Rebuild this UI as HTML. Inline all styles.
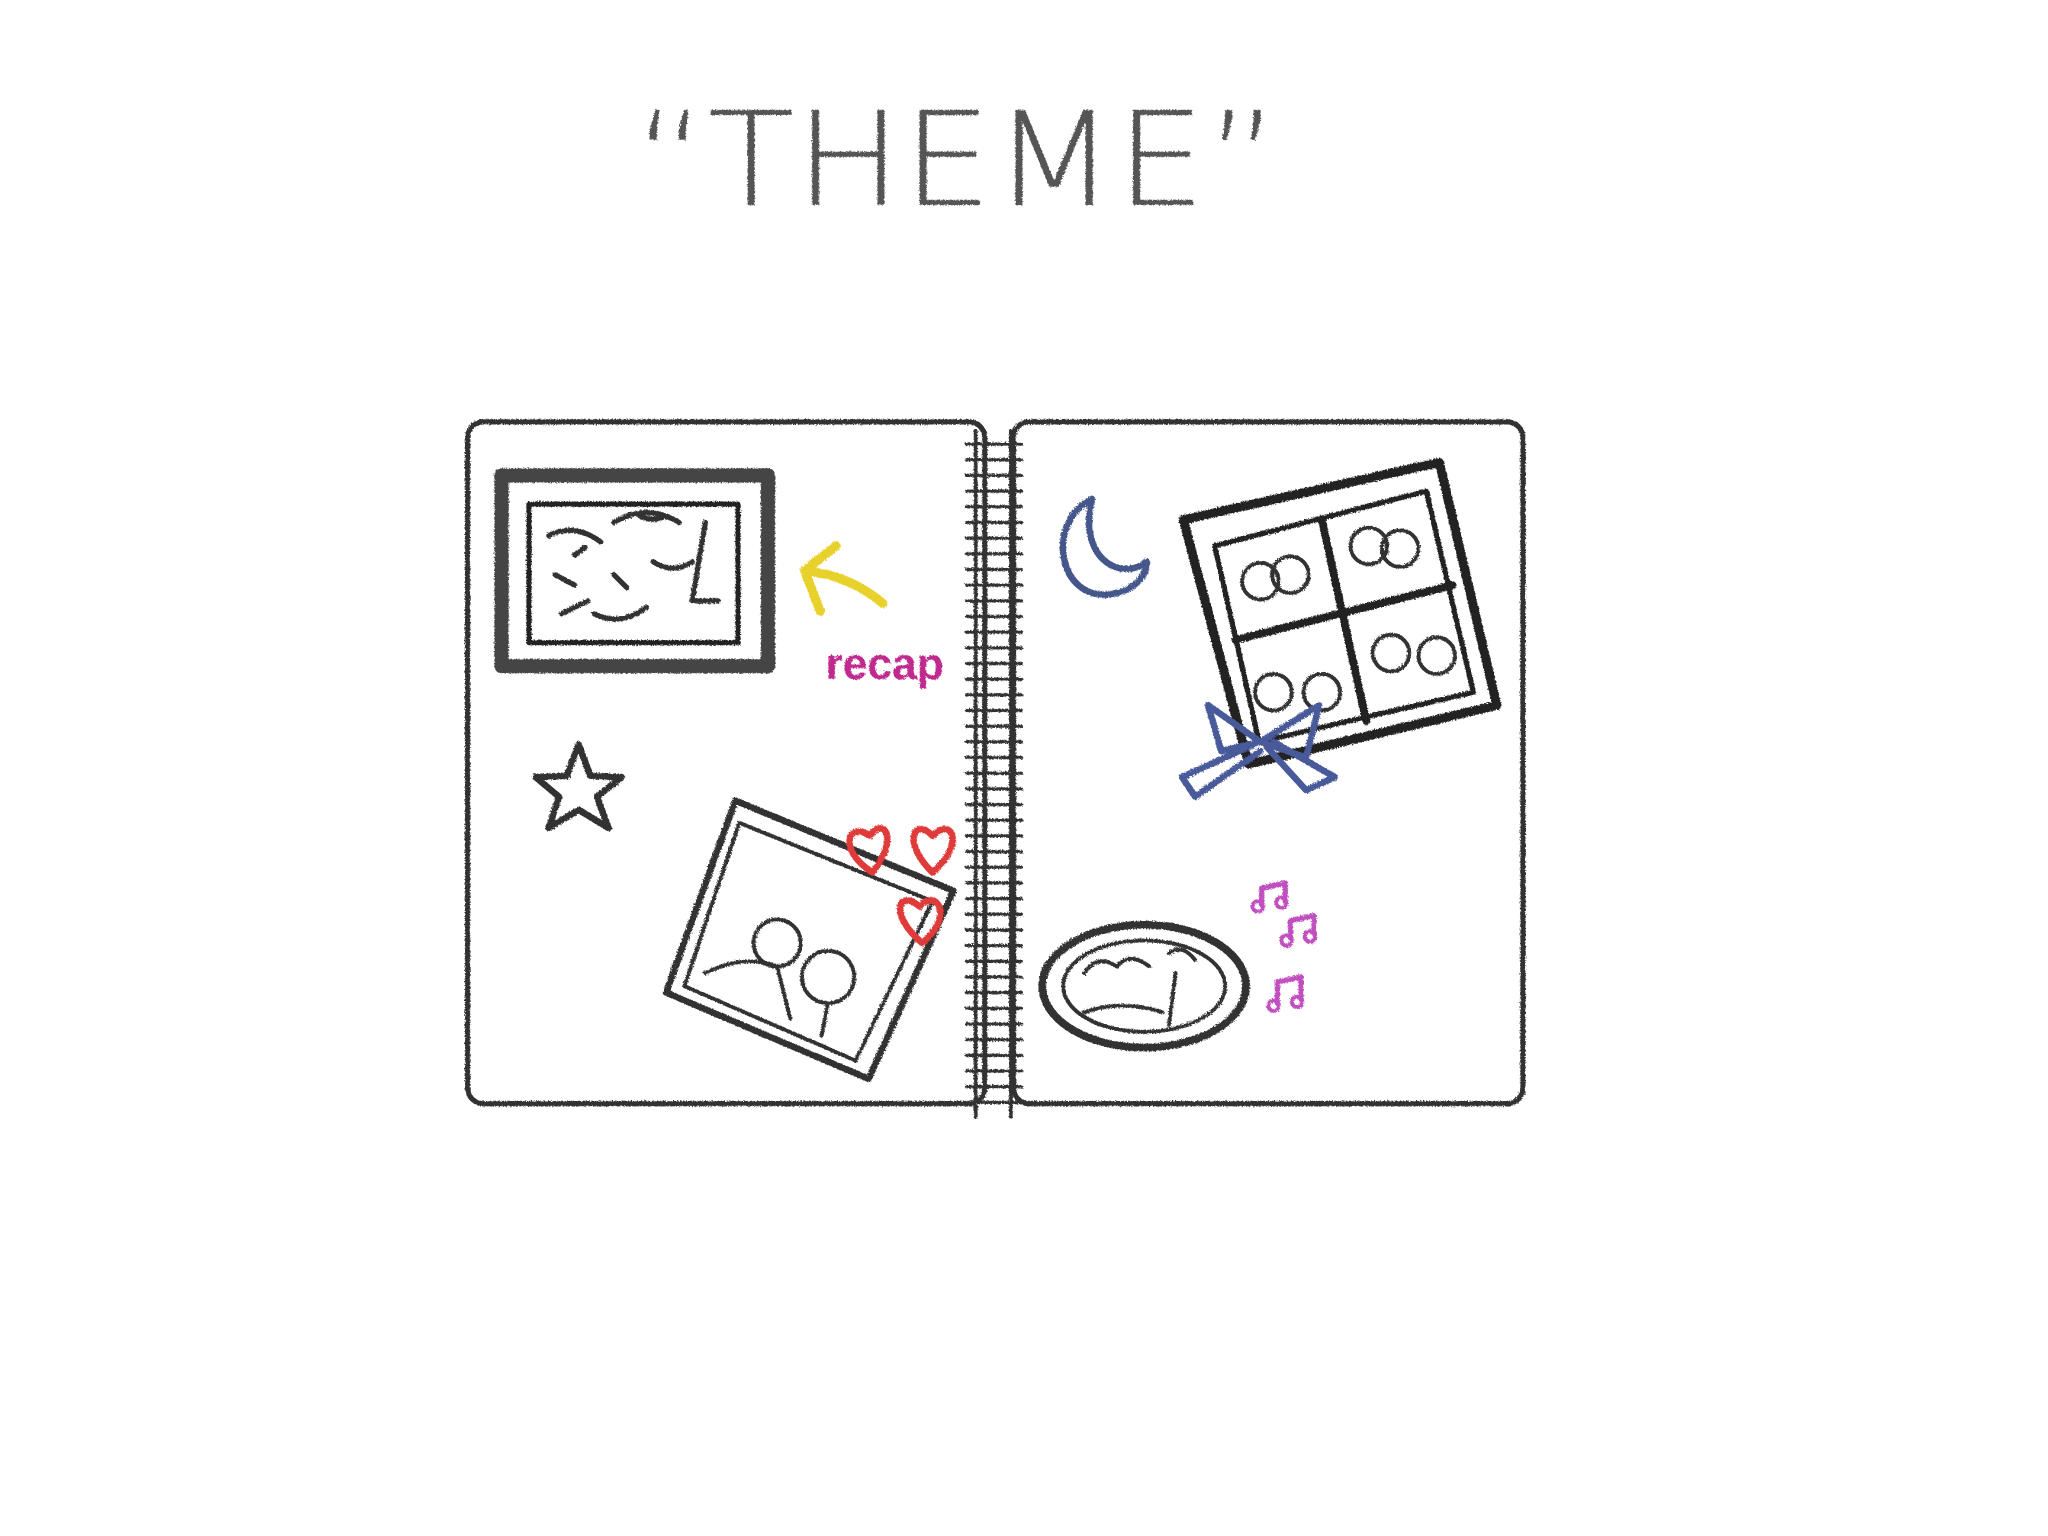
<!DOCTYPE html>
<html><head><meta charset="utf-8"><style>
html,body{margin:0;padding:0;background:#fff;width:2048px;height:1536px;overflow:hidden}
svg{display:block}
</style></head><body>
<svg width="2048" height="1536" viewBox="0 0 1568 1176" xmlns="http://www.w3.org/2000/svg">
<defs>
<filter id="p" x="-5%" y="-5%" width="110%" height="110%">
<feTurbulence type="fractalNoise" baseFrequency="0.9" numOctaves="2" result="n"/>
<feDisplacementMap in="SourceGraphic" in2="n" scale="3"/>
</filter>
</defs>
<g filter="url(#p)" fill="none" stroke-linecap="round" stroke-linejoin="round">
<!-- title -->
<text x="485" y="157" font-family="DejaVu Sans, Liberation Sans, sans-serif" font-size="100" font-weight="200" fill="#555" stroke="none" textLength="495" lengthAdjust="spacingAndGlyphs">“THEME”</text>
<!-- notebook pages -->
<rect x="358" y="323" width="396" height="522" rx="12" stroke="#333" stroke-width="4"/>
<rect x="776" y="323" width="390" height="522" rx="12" stroke="#333" stroke-width="4"/>
<!-- spiral -->
<line x1="747" y1="330" x2="747" y2="855" stroke="#333" stroke-width="3"/>
<line x1="774" y1="330" x2="774" y2="855" stroke="#333" stroke-width="3"/>
<path d="M740 340 L782 340 M740 352 L782 352 M740 364 L782 364 M740 376 L782 376 M740 388 L782 388 M740 400 L782 400 M740 412 L782 412 M740 424 L782 424 M740 436 L782 436 M740 448 L782 448 M740 460 L782 460 M740 472 L782 472 M740 484 L782 484 M740 496 L782 496 M740 508 L782 508 M740 520 L782 520 M740 532 L782 532 M740 544 L782 544 M740 556 L782 556 M740 568 L782 568 M740 580 L782 580 M740 592 L782 592 M740 604 L782 604 M740 616 L782 616 M740 628 L782 628 M740 640 L782 640 M740 652 L782 652 M740 664 L782 664 M740 676 L782 676 M740 688 L782 688 M740 700 L782 700 M740 712 L782 712 M740 724 L782 724 M740 736 L782 736 M740 748 L782 748 M740 760 L782 760 M740 772 L782 772 M740 784 L782 784 M740 796 L782 796 M740 808 L782 808 M740 820 L782 820 M740 832 L782 832 M740 844 L782 844" stroke="#333" stroke-width="2.5"/>
<!-- stamp frame -->
<rect x="384" y="364" width="204" height="146" stroke="#444" stroke-width="11" stroke-dasharray="2 2"/>
<rect x="405" y="386" width="160" height="106" stroke="#222" stroke-width="4"/>
<path d="M420 410 q20 -10 40 5 M470 400 q25 -15 50 0 M425 440 l15 8 M430 470 l20 -10 M455 470 q20 10 40 -5 M500 430 q15 10 30 0 M540 400 l-10 60 l20 0 M470 440 l10 10 M490 395 q10 5 20 0 M440 425 l8 -6" stroke="#333" stroke-width="4"/>
<!-- yellow arrow -->
<path d="M676 462 Q650 440 616 437 M616 437 L640 418 M616 437 L628 468" stroke="#e8d12a" stroke-width="7"/>
<text x="632" y="520" font-family="Liberation Sans, sans-serif" font-size="34" font-weight="bold" fill="#c02a8f" stroke="none">recap</text>
<!-- star -->
<path d="M443 570 L452 594 L476 595 L457 610 L466 634 L443 620 L420 634 L428 610 L410 595 L434 594 Z" stroke="#333" stroke-width="5"/>
<!-- tilted photo -->
<path d="M563 613 L730 682 L665 826 L510 760 Z" stroke="#333" stroke-width="5"/>
<path d="M566 630 L714 690 L655 812 L524 755 Z" stroke="#333" stroke-width="3"/>
<circle cx="595" cy="722" r="18" stroke="#333" stroke-width="3"/>
<circle cx="634" cy="748" r="20" stroke="#333" stroke-width="3"/>
<path d="M540 745 q30 -15 55 -5 M595 740 l10 40 M634 768 l-5 25" stroke="#333" stroke-width="3"/>
<!-- hearts -->
<path d="M668 668 C640 650 650 628 666 640 C675 625 690 640 668 668 Z" stroke="#e03a3a" stroke-width="5"/>
<path d="M714 668 C690 645 700 625 714 640 C728 625 740 645 714 668 Z" stroke="#e03a3a" stroke-width="5"/>
<path d="M706 722 C680 700 688 680 704 694 C716 680 732 700 706 722 Z" stroke="#e03a3a" stroke-width="5"/>
<!-- moon -->
<path d="M836 382 C800 400 810 460 850 455 C870 452 878 440 878 430 C860 445 825 430 836 382 Z" stroke="#44578a" stroke-width="5"/>
<!-- photo booth grid -->
<path d="M906 398 L1102 354 L1146 540 L956 585 Z" stroke="#222" stroke-width="7"/>
<path d="M930 418 L1092 376 L1128 530 L964 568 Z" stroke="#222" stroke-width="4"/>
<path d="M946 490 L1112 448 M1012 398 L1046 552" stroke="#222" stroke-width="6"/>
<circle cx="965" cy="445" r="14" stroke="#333" stroke-width="3"/><circle cx="988" cy="440" r="14" stroke="#333" stroke-width="3"/>
<circle cx="1048" cy="418" r="14" stroke="#333" stroke-width="3"/><circle cx="1072" cy="420" r="14" stroke="#333" stroke-width="3"/>
<circle cx="975" cy="530" r="14" stroke="#333" stroke-width="3"/><circle cx="1012" cy="530" r="14" stroke="#333" stroke-width="3"/>
<circle cx="1065" cy="500" r="14" stroke="#333" stroke-width="3"/><circle cx="1100" cy="502" r="14" stroke="#333" stroke-width="3"/>
<!-- bow -->
<path d="M965 568 L925 540 L935 575 Z M965 568 L1010 540 L1000 580 Z M960 570 L905 595 L915 610 L965 575 M970 572 L1000 605 L1022 595 L975 568" stroke="#4a5a9a" stroke-width="5"/>
<!-- oval frame -->
<ellipse cx="876" cy="755" rx="78" ry="47" stroke="#333" stroke-width="6" stroke-dasharray="3 2"/>
<ellipse cx="876" cy="755" rx="62" ry="35" stroke="#333" stroke-width="3"/>
<path d="M830 745 q10 -15 25 -5 q10 -12 25 0 M895 730 q10 -8 20 5 M900 745 l-5 40 M830 775 q30 -10 60 0" stroke="#333" stroke-width="3"/>
<!-- music notes -->
<path d="M966 693 L966 680 L984 676 L984 690 M966 680 L984 676" stroke="#c04fc0" stroke-width="4"/>
<circle cx="963" cy="694" r="4" stroke="#c04fc0" stroke-width="3"/><circle cx="981" cy="691" r="4" stroke="#c04fc0" stroke-width="3"/>
<path d="M988 718 L988 705 L1006 701 L1006 715" stroke="#c04fc0" stroke-width="4"/>
<circle cx="985" cy="720" r="4" stroke="#c04fc0" stroke-width="3"/><circle cx="1003" cy="717" r="4" stroke="#c04fc0" stroke-width="3"/>
<path d="M978 768 L978 752 L996 748 L996 765" stroke="#c04fc0" stroke-width="4"/>
<circle cx="975" cy="770" r="4" stroke="#c04fc0" stroke-width="3"/><circle cx="993" cy="767" r="4" stroke="#c04fc0" stroke-width="3"/>
</g>
</svg>
</body></html>
